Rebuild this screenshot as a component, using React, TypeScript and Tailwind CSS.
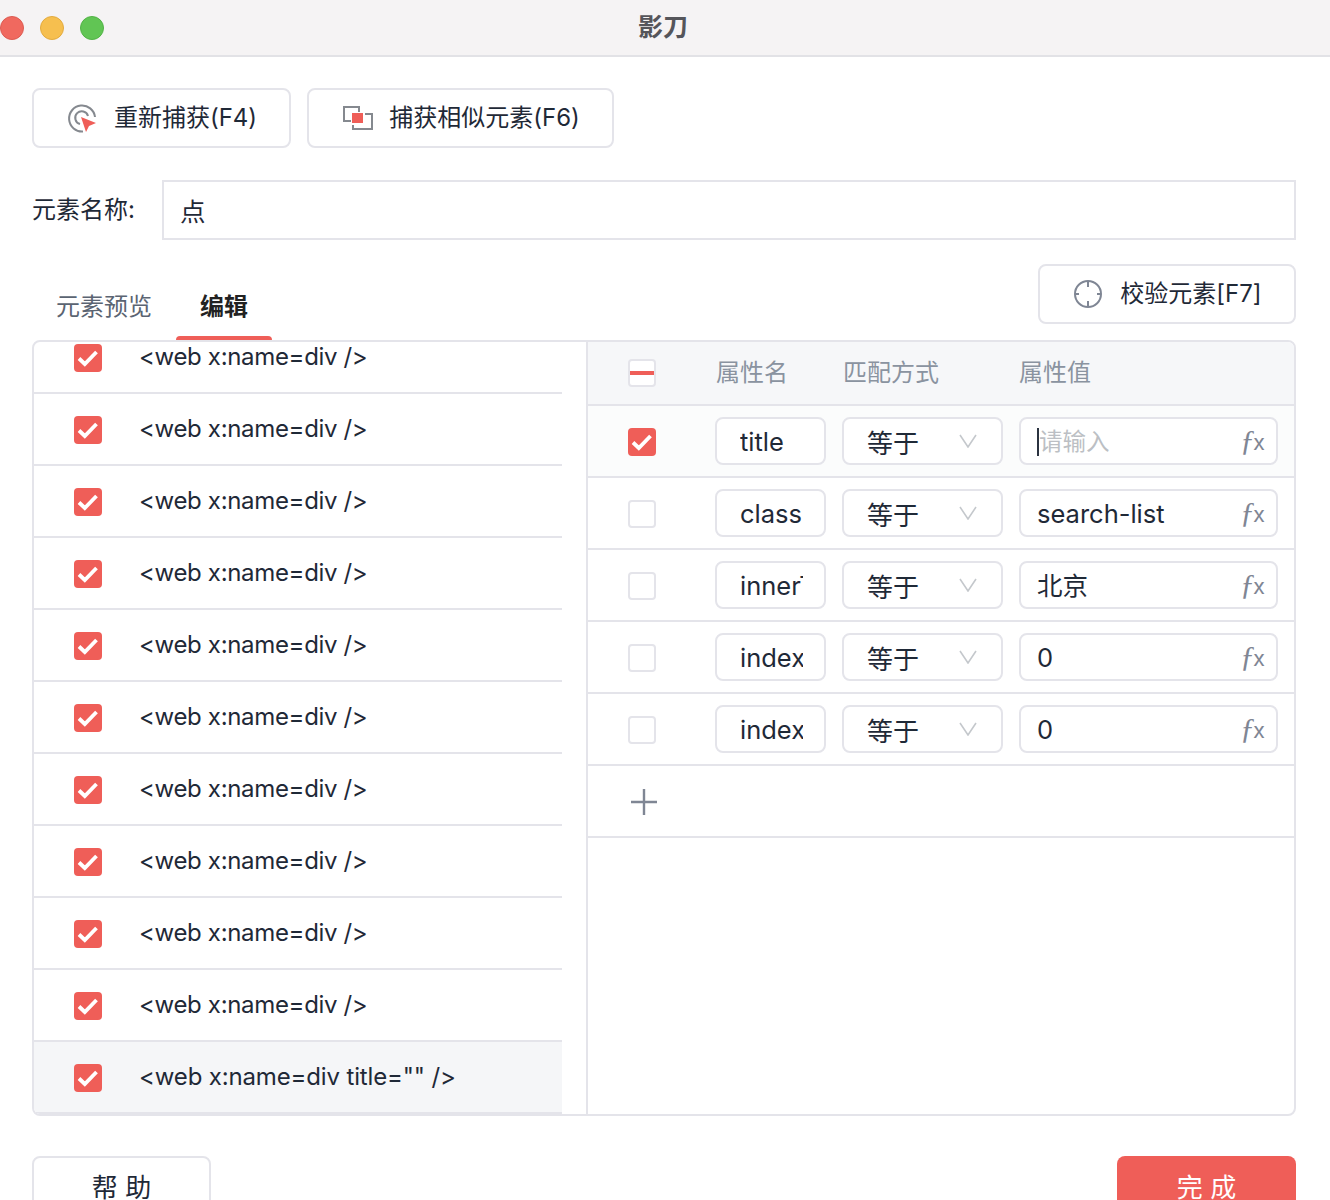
import React from "react";

const listRows = Array.from({ length: 10 }, (_, i) => i);

const attrRows = [
  { name: "title", value: "", checked: true },
  { name: "class", value: "search-list", checked: false },
  { name: "innerText", value: "北京", checked: false },
  { name: "index", value: "0", checked: false },
  { name: "index", value: "0", checked: false },
];

function CheckBox({ checked }: { checked: boolean }) {
  if (!checked) {
    return <div className="w-7 h-7 shrink-0 rounded-[4px] border-2 border-[#e4e4ea] bg-white" />;
  }
  return (
    <div className="w-7 h-7 shrink-0 rounded-[4px] bg-[#ef5e58] flex items-center justify-center">
      <svg width="28" height="28" viewBox="0 0 28 28" fill="none">
        <path d="M5 14.5 L10.8 20 L22.5 8" stroke="#fff" strokeWidth="3.8" />
      </svg>
    </div>
  );
}

function RecaptureIcon() {
  return (
    <svg width="30" height="30" viewBox="0 0 30 30" fill="none" className="translate-x-px">
      <path d="M16 28.5 A13 13 0 1 1 28 14" stroke="#85898f" strokeWidth="2" />
      <path d="M13 21 A6.5 6.5 0 1 1 21 13" stroke="#85898f" strokeWidth="2" />
      <path d="M14 14 L29 20 L22 23 L19 29 Z" fill="#ef5e58" />
    </svg>
  );
}

function SimilarIcon() {
  return (
    <svg width="32" height="26" viewBox="0 0 32 26" fill="none" className="translate-x-px">
      <path d="M9 16 H2 V2 H17 V7" stroke="#85898f" strokeWidth="2" />
      <path d="M23 9 H30 V24 H11 V20" stroke="#85898f" strokeWidth="2" />
      <rect x="10" y="8" width="11" height="10" fill="#ef5e58" />
    </svg>
  );
}

function TargetIcon() {
  return (
    <svg width="30" height="30" viewBox="0 0 30 30" fill="none" className="translate-x-px">
      <circle cx="15" cy="15" r="13" stroke="#7f8694" strokeWidth="2" />
      <path d="M15 2 V8 M15 22 V28 M2 15 H6 M24 15 H28" stroke="#7f8694" strokeWidth="2" />
    </svg>
  );
}

export default function App() {
  return (
    <div className="w-[1330px] h-[1200px] overflow-hidden bg-white text-[#1f2937] font-['Inter','Noto_Sans_CJK_SC',sans-serif] text-[24px] leading-none">
      {/* title bar */}
      <div className="relative h-[57px] bg-[#f5f3f4] border-b-2 border-[#e2e2e6] flex items-center justify-center pr-1">
        <div className="absolute left-0 top-4 flex gap-4">
          <div className="w-6 h-6 rounded-full bg-[#f0695f] border border-[#dd5c52]" />
          <div className="w-6 h-6 rounded-full bg-[#f6bf4f] border border-[#e3ab3f]" />
          <div className="w-6 h-6 rounded-full bg-[#61c554] border border-[#52b346]" />
        </div>
        <span className="font-bold text-[25px] text-[#55555a]">影刀</span>
      </div>

      <div className="pl-8 pr-[34px] pt-[31px]">
        <div className="flex gap-4">
          <button className="h-[60px] w-[259px] flex items-center justify-center gap-[18px] border-2 border-[#e4e4ea] rounded-lg">
            <RecaptureIcon />
            <span>重新捕获(F4)</span>
          </button>
          <button className="h-[60px] w-[307px] flex items-center justify-center gap-4 border-2 border-[#e4e4ea] rounded-lg">
            <SimilarIcon />
            <span>捕获相似元素(F6)</span>
          </button>
        </div>

        <div className="mt-8 flex items-center">
          <span className="w-[130px]">元素名称:</span>
          <div className="flex-1 h-[60px] border-2 border-[#e4e4ea] flex items-center pl-4 pt-[3px] text-[25.5px]">点</div>
        </div>

        <div className="mt-6 h-[76px] flex justify-between">
          <div className="flex self-end">
            <div className="px-6 pb-[21px] text-[#5b6472]">元素预览</div>
            <div className="relative px-6 pb-[21px] font-bold text-[#222]">
              编辑
              <div className="absolute left-0 right-0 bottom-0 h-1 rounded-t bg-[#ef5e58]" />
            </div>
          </div>
          <button className="h-[60px] w-[258px] flex items-center justify-center gap-[18px] border-2 border-[#e4e4ea] rounded-lg">
            <TargetIcon />
            <span>校验元素[F7]</span>
          </button>
        </div>

        {/* panels */}
        <div className="h-[776px] flex border-2 border-[#e4e4ea] rounded-lg overflow-hidden">
          <div className="w-[554px] shrink-0 border-r-2 border-[#e4e4ea] overflow-hidden">
            <div className="w-[528px] -mt-[20px]">
              {listRows.map((i) => (
                <div key={i} className="h-[72px] flex items-center border-b-2 border-[#e4e4ea]">
                  <div className="ml-10 mt-[2px]"><CheckBox checked /></div>
                  <span className="ml-[37px] tracking-[-0.33px]">{"<web x:name=div />"}</span>
                </div>
              ))}
              <div className="h-[72px] flex items-center border-b-2 border-[#e4e4ea] bg-[#f5f6f8]">
                <div className="ml-10 mt-[2px]"><CheckBox checked /></div>
                <span className="ml-[37px] tracking-[-0.15px]">{'<web x:name=div title="" />'}</span>
              </div>
            </div>
          </div>

          <div className="flex-1 min-w-0">
            <div className="h-[64px] flex items-center bg-[#f6f7f9] border-b-2 border-[#e4e4ea] text-[#8a93a0]">
              <div className="ml-10 w-7 h-7 rounded-[4px] border-2 border-[#e4e4ea] bg-white flex items-center justify-center">
                <div className="w-[24px] h-1 shrink-0 bg-[#ef5e58]" />
              </div>
              <span className="ml-[60px] w-[127px]">属性名</span>
              <span className="w-[176px]">匹配方式</span>
              <span>属性值</span>
            </div>

            {attrRows.map((row, i) => (
              <div
                key={i}
                className={`h-[72px] flex items-center border-b-2 border-[#e4e4ea] ${row.checked ? "bg-[#fbfcfc]" : ""}`}
              >
                <div className="ml-10 mt-[2px]"><CheckBox checked={row.checked} /></div>
                <div className="ml-[59px] w-[111px] h-12 bg-white border-2 border-[#e4e4ea] rounded-lg pl-[23px] pt-[2px] flex items-center">
                  <div className="w-[63px] overflow-hidden whitespace-nowrap text-[25.5px]">{row.name}</div>
                </div>
                <div className="ml-4 w-[161px] h-12 bg-white border-2 border-[#e4e4ea] rounded-lg pl-[23px] pr-6 flex items-center justify-between">
                  <span className="text-[26px] mt-[6px]">等于</span>
                  <svg width="18" height="14" viewBox="0 0 18 14" fill="none">
                    <path d="M1 1 L9 13 L17 1" stroke="#c4c8cc" strokeWidth="1.6" />
                  </svg>
                </div>
                <div className="ml-4 w-[259px] h-12 bg-white border-2 border-[#e4e4ea] rounded-lg pl-4 pr-[11px] pt-[2px] flex items-center justify-between">
                  {row.value ? (
                    <span className="text-[25.5px]">{row.value}</span>
                  ) : (
                    <span className="border-l-2 border-[#2b3340] h-7 flex items-center text-[23.5px] text-[#bcbfc4]">请输入</span>
                  )}
                  <span className="flex items-baseline -mt-1 text-[#7f8694]">
                    <span className="font-['Liberation_Serif',serif] italic text-[30px]">ƒ</span>
                    <span className="text-[22px] -ml-[2px]">x</span>
                  </span>
                </div>
              </div>
            ))}

            <div className="h-[72px] flex items-center border-b-2 border-[#e4e4ea] pl-[42px] pt-[2px]">
              <svg width="28" height="28" viewBox="0 0 28 28" fill="none">
                <path d="M14 1 V27 M1 14 H27" stroke="#7f8694" strokeWidth="2.4" />
              </svg>
            </div>
          </div>
        </div>

        <div className="mt-10 flex justify-between">
          <button className="w-[179px] h-[60px] border-2 border-[#e4e4ea] rounded-lg pt-1 text-[26px]">帮 助</button>
          <button className="w-[179px] h-[60px] rounded-lg bg-[#ef5e58] text-white pt-1 text-[26px]">完 成</button>
        </div>
      </div>
    </div>
  );
}
